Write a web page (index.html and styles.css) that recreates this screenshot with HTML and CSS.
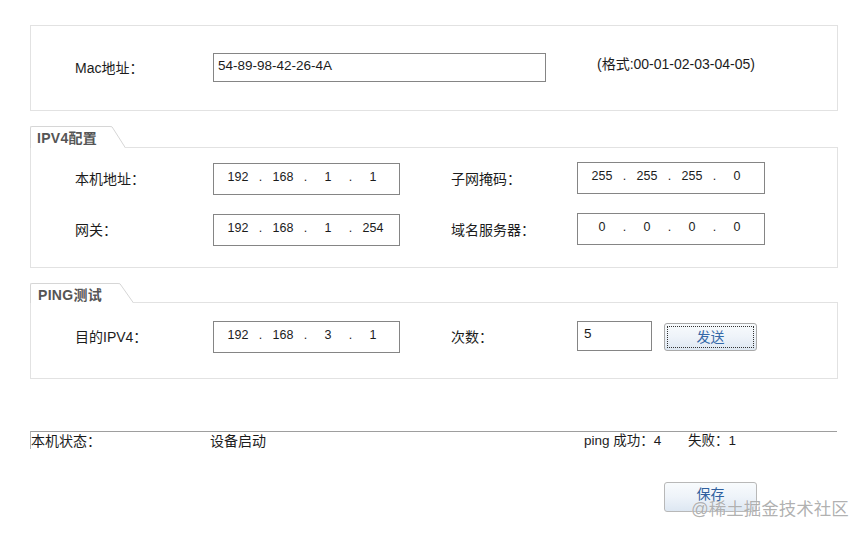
FILE: index.html
```html
<!DOCTYPE html>
<html lang="zh-CN">
<head>
<meta charset="utf-8">
<title>网络配置</title>
<link rel="stylesheet" href="styles.css">
</head>
<body>
<div class="page">
  <section class="box mac-box">
    <span class="lbl lbl-left">Mac地址：</span>
    <div class="field mac-field">54-89-98-42-26-4A</div>
    <span class="hint">(格式:00-01-02-03-04-05)</span>
  </section>

  <section class="group group-ipv4">
    <div class="tab">
      <span class="tab-text">IPV4配置</span>
      <svg class="slant" width="16" height="22" viewBox="0 0 16 22"><polygon points="0,0 16,22 0,22" fill="#fff"/><polyline points="0,0.5 2,0.8 15.5,22" fill="none" stroke="#d6d6d6" stroke-width="1"/></svg>
    </div>
    <div class="panel panel-ipv4">
      <div class="row">
        <span class="lbl lbl-left">本机地址：</span>
        <div class="field ip"><span class="oct">192</span><span class="dot">.</span><span class="oct">168</span><span class="dot">.</span><span class="oct">1</span><span class="dot">.</span><span class="oct">1</span></div>
        <span class="lbl lbl-right">子网掩码：</span>
        <div class="field ip ip-right"><span class="oct">255</span><span class="dot">.</span><span class="oct">255</span><span class="dot">.</span><span class="oct">255</span><span class="dot">.</span><span class="oct">0</span></div>
      </div>
      <div class="row">
        <span class="lbl lbl-left">网关：</span>
        <div class="field ip"><span class="oct">192</span><span class="dot">.</span><span class="oct">168</span><span class="dot">.</span><span class="oct">1</span><span class="dot">.</span><span class="oct">254</span></div>
        <span class="lbl lbl-right">域名服务器：</span>
        <div class="field ip ip-right"><span class="oct">0</span><span class="dot">.</span><span class="oct">0</span><span class="dot">.</span><span class="oct">0</span><span class="dot">.</span><span class="oct">0</span></div>
      </div>
    </div>
  </section>

  <section class="group group-ping">
    <div class="tab tab-ping">
      <span class="tab-text">PING测试</span>
      <svg class="slant" width="16" height="20" viewBox="0 0 16 20"><polygon points="0,0 16,20 0,20" fill="#fff"/><polyline points="0,0.5 2,0.8 15.5,20" fill="none" stroke="#d6d6d6" stroke-width="1"/></svg>
    </div>
    <div class="panel panel-ping">
      <div class="row">
        <span class="lbl lbl-left">目的IPV4：</span>
        <div class="field ip"><span class="oct">192</span><span class="dot">.</span><span class="oct">168</span><span class="dot">.</span><span class="oct">3</span><span class="dot">.</span><span class="oct">1</span></div>
        <span class="lbl lbl-right">次数：</span>
        <div class="field count-field">5</div>
        <button class="btn btn-send" type="button"><span class="focus">发送</span></button>
      </div>
    </div>
  </section>

  <div class="status">
    <span class="st-label">本机状态：</span>
    <span class="st-value">设备启动</span>
    <span class="st-ok">ping 成功：4</span>
    <span class="st-fail">失败：1</span>
  </div>

  <div class="actions">
    <button class="btn btn-save" type="button">保存</button>
  </div>

  <div class="watermark">@稀土掘金技术社区</div>
</div>
</body>
</html>
```

FILE: styles.css
```css
html, body {
  margin: 0;
  padding: 0;
  background: #ffffff;
}

body {
  font-family: "Liberation Sans", "Noto Sans CJK SC", sans-serif;
  font-size: 14px;
  color: #1c1c1c;
}

.page {
  position: relative;
  width: 868px;
  height: 534px;
  padding: 25px 0 0 30px;
  box-sizing: border-box;
}

.box {
  width: 808px;
  box-sizing: border-box;
  border: 1px solid #e2e2e2;
}

.mac-box {
  height: 86px;
  display: flex;
  align-items: center;
  padding-left: 44px;
}

.lbl {
  display: inline-block;
  font-size: 14px;
  line-height: 18px;
  white-space: nowrap;
}

.lbl-left {
  width: 138px;
  flex: none;
}

.lbl-right {
  width: 126px;
  flex: none;
}

.field {
  box-sizing: border-box;
  border: 1px solid #858585;
  background: #fff;
  flex: none;
}

.mac-field {
  width: 333px;
  height: 29px;
  padding: 4px 0 0 4px;
  font-size: 13.5px;
  line-height: 16px;
  margin-top: -1px;
}

.hint {
  margin-left: 51px;
  font-size: 14px;
  line-height: 18px;
  margin-top: -8px;
}

.group {
  margin-top: 15px;
  width: 808px;
}

.tab {
  display: flex;
  position: relative;
  z-index: 1;
  margin-bottom: -1px;
  height: 22px;
}

.tab-ping {
  height: 20px;
}

.tab-text {
  box-sizing: border-box;
  width: 80px;
  border-top: 1px solid #d6d6d6;
  border-left: 1px solid #d6d6d6;
  border-top-left-radius: 2px;
  background: #fff;
  padding: 3px 0 0 6px;
  font-size: 14px;
  font-weight: bold;
  color: #555555;
  line-height: 17px;
  letter-spacing: 0.3px;
}

.tab-ping .tab-text {
  width: 88px;
  padding: 3px 0 0 7px;
}

.slant {
  display: block;
  flex: none;
}

.panel {
  box-sizing: border-box;
  border: 1px solid #e2e2e2;
  padding-left: 44px;
}

.panel-ipv4 {
  height: 121px;
  padding-top: 15px;
  display: flex;
  flex-direction: column;
  gap: 19px;
}

.panel-ping {
  height: 77px;
  padding-top: 18px;
}

.row {
  display: flex;
  align-items: center;
}

.ip {
  width: 187px;
  height: 32px;
  display: flex;
  padding: 5px 0 0 10px;
  font-size: 12.5px;
  line-height: 16px;
}

.ip-right {
  width: 188px;
  margin-left: 51px;
  margin-top: -3px;
}

.lbl-right {
  margin-left: 51px;
}

.ip + .lbl-right {
  margin-left: 51px;
}

.ip-right {
  margin-left: 0;
}

.oct {
  width: 28px;
  text-align: center;
}

.dot {
  width: 17px;
  text-align: center;
}

.count-field {
  width: 75px;
  height: 30px;
  padding: 4px 0 0 6px;
  font-size: 13.5px;
  line-height: 16px;
  margin-top: -2px;
}

.btn {
  font-family: "Liberation Sans", "Noto Sans CJK SC", sans-serif;
  font-size: 14px;
  color: #3569a8;
  box-sizing: border-box;
  width: 93px;
  border: 1px solid #a9a9a9;
  border-radius: 3px;
  background: linear-gradient(#f8fbfd 0%, #eef3f9 50%, #dde7f2 100%);
  padding: 0;
  cursor: pointer;
}

.btn-send {
  height: 28px;
  margin-left: 12px;
  padding: 2px;
  margin-top: -1px;
}

.btn-send .focus {
  display: block;
  height: 100%;
  box-sizing: border-box;
  border: 1px dotted #333;
  line-height: 20px;
}

.status {
  margin-top: 52px;
  width: 807px;
  height: 18px;
  box-sizing: border-box;
  border-top: 1px solid #9e9e9e;
  border-left: 1px solid #b5b5b5;
  display: flex;
  font-size: 14px;
  line-height: 18px;
}

.st-label {
  width: 179px;
  flex: none;
}

.st-value {
  width: 374px;
  flex: none;
}

.st-ok {
  width: 104px;
  flex: none;
  font-size: 13.5px;
}

.st-fail {
  font-size: 13.5px;
}

.actions {
  margin-top: 33px;
  width: 808px;
  display: flex;
  justify-content: flex-end;
  padding-right: 81px;
  box-sizing: border-box;
}

.btn-save {
  height: 30px;
  line-height: 20px;
  padding-bottom: 6px;
  color: #2f5f9e;
  border-color: #b8b8b8;
}

.watermark {
  position: absolute;
  left: 691px;
  top: 498px;
  font-size: 17.5px;
  line-height: 22px;
  color: rgba(110, 110, 110, 0.55);
  white-space: nowrap;
  text-shadow: 0 0 1px #fff;
}
```
